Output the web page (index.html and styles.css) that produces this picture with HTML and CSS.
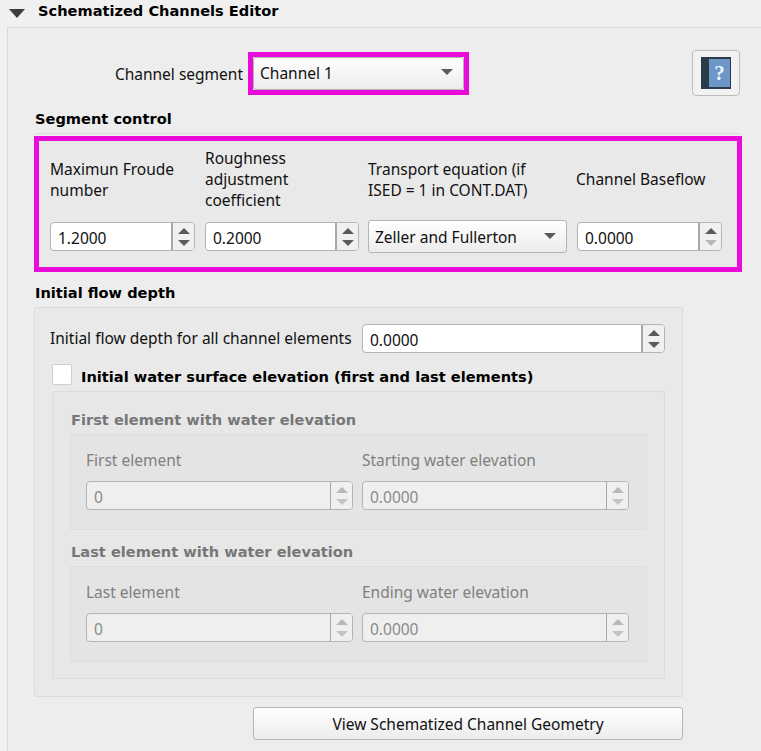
FILE: index.html
```html
<!DOCTYPE html>
<html lang="en">
  <head>
    <meta charset="UTF-8" />
    <title>Schematized Channels Editor</title>
    <link rel="stylesheet" href="styles.css">
  </head>
  <body>
    <header class="panel-head">
      <span class="collapse-arrow"></span>
      <h1 class="panel-title">Schematized Channels Editor</h1>
    </header>
    <main class="panel">
      <div class="channel-row">
        <label class="channel-label">Channel segment</label>
        <div class="highlight channel-box">
          <div class="combo channel-combo">
            <span>Channel 1</span>
            <span class="combo-arrow"></span>
          </div>
        </div>
        <button class="help-btn" type="button">
          <span class="book"><span class="book-spine"></span><span class="book-cover">?</span></span>
        </button>
      </div>

      <h2 class="group-title seg-title">Segment control</h2>
      <div class="seg-frame">
        <section class="highlight seg-grid">
          <label>Maximun Froude number</label>
          <label>Roughness adjustment coefficient</label>
          <label class="shift">Transport equation (if<br>ISED = 1 in CONT.DAT)</label>
          <label class="shift">Channel Baseflow</label>
          <div class="spin">
            <span class="spin-value">1.2000</span>
            <span class="spin-btns"><i class="up"></i><i class="down"></i></span>
          </div>
          <div class="spin">
            <span class="spin-value">0.2000</span>
            <span class="spin-btns"><i class="up"></i><i class="down"></i></span>
          </div>
          <div class="combo shift">
            <span>Zeller and Fullerton</span>
            <span class="combo-arrow"></span>
          </div>
          <div class="spin">
            <span class="spin-value">0.0000</span>
            <span class="spin-btns"><i class="up"></i><i class="down at-min"></i></span>
          </div>
        </section>
      </div>

      <h2 class="group-title depth-title">Initial flow depth</h2>
      <section class="group depth-group">
        <div class="depth-row">
          <label class="depth-label">Initial flow depth for all channel elements</label>
          <div class="spin depth-spin">
            <span class="spin-value">0.0000</span>
            <span class="spin-btns"><i class="up"></i><i class="down"></i></span>
          </div>
        </div>
        <div class="check-row">
          <span class="checkbox"></span>
          <span class="check-text">Initial water surface elevation (first and last elements)</span>
        </div>
        <div class="group wse-group">
          <h3 class="group-title off-title">First element with water elevation</h3>
          <div class="group element-group">
            <label>First element</label>
            <label>Starting water elevation</label>
            <div class="spin disabled">
              <span class="spin-value">0</span>
              <span class="spin-btns"><i class="up"></i><i class="down"></i></span>
            </div>
            <div class="spin disabled">
              <span class="spin-value">0.0000</span>
              <span class="spin-btns"><i class="up"></i><i class="down"></i></span>
            </div>
          </div>
          <h3 class="group-title off-title off-second">Last element with water elevation</h3>
          <div class="group element-group">
            <label>Last element</label>
            <label>Ending water elevation</label>
            <div class="spin disabled">
              <span class="spin-value">0</span>
              <span class="spin-btns"><i class="up"></i><i class="down"></i></span>
            </div>
            <div class="spin disabled">
              <span class="spin-value">0.0000</span>
              <span class="spin-btns"><i class="up"></i><i class="down"></i></span>
            </div>
          </div>
        </div>
      </section>
      <button class="view-btn" type="button">View Schematized Channel Geometry</button>
    </main>
  </body>
</html>
```

FILE: styles.css
```css
* {
  box-sizing: border-box;
}
html,
body {
  margin: 0;
  height: 751px;
  overflow: hidden;
}
body {
  font-family: "Noto Sans", sans-serif;
  font-size: 15.5px;
  color: #111;
  background-color: #f0f0f0;
}
label {
  display: block;
  line-height: 21px;
}
.panel-head {
  display: flex;
  align-items: center;
  height: 27px;
  padding: 0 0 6px 9px;
}
.collapse-arrow {
  width: 0;
  height: 0;
  border-left: 8px solid transparent;
  border-right: 8px solid transparent;
  border-top: 9px solid #3c3c3c;
  margin-top: 6px;
}
.panel-title {
  margin: 0 0 0 13px;
  font-family: "DejaVu Sans", sans-serif;
  font-size: 14.6px;
  font-weight: bold;
  color: #000;
}
.panel {
  margin-left: 7px;
  padding: 22px 0 12px 0;
  background-color: #ededed;
  border-top: 1px solid #d9d9d9;
  border-left: 1px solid #d9d9d9;
}
.channel-row {
  display: flex;
  align-items: center;
  height: 46px;
}
.channel-label {
  width: 235px;
  padding-top: 2px;
  text-align: right;
}
.highlight {
  border: 5px solid #e90cd8;
}
.channel-box {
  width: 221px;
  height: 43px;
  margin-left: 5px;
}
.combo {
  display: flex;
  align-items: center;
  justify-content: space-between;
  height: 33px;
  padding: 0 10px 0 6px;
  background: linear-gradient(#ffffff, #ececec);
  border: 1px solid #b4b4b4;
  border-radius: 3px;
}
.combo-arrow {
  width: 0;
  height: 0;
  margin-bottom: 2px;
  border-left: 6px solid transparent;
  border-right: 6px solid transparent;
  border-top: 6px solid #5a5a5a;
}
.help-btn {
  width: 48px;
  height: 46px;
  margin: 0 21px 0 auto;
  padding: 0;
  display: flex;
  align-items: center;
  justify-content: center;
  background: #f2f2f2;
  border: 1px solid #bdbdbd;
  border-radius: 4px;
}
.book {
  display: flex;
  width: 30px;
  height: 32px;
  border: 2px solid #2b3a48;
  border-right-width: 1px;
}
.book-spine {
  width: 6px;
  background-color: #2b3a48;
}
.book-cover {
  flex: 1;
  text-align: center;
  font-family: "Liberation Serif", serif;
  font-size: 21px;
  font-weight: bold;
  line-height: 28px;
  color: #eef3f9;
  background-color: #6c97c6;
}
.group-title {
  margin: 0;
  height: 20px;
  line-height: 20px;
  font-family: "DejaVu Sans", sans-serif;
  font-size: 14.6px;
  font-weight: bold;
  color: #000;
}
.seg-title {
  margin: 13px 0 0 27px;
}
.seg-frame {
  width: 706px;
  margin: 4px 0 0 27px;
  padding-top: 2px;
  border-top: 1px solid #dcdcdc;
}
.seg-grid {
  display: grid;
  width: 708px;
  margin-left: -1px;
  height: 136px;
  padding: 7px 0 0 11px;
  grid-template-columns: 145px 154px 198px 145px;
  grid-template-rows: 63px 33px;
  column-gap: 10px;
  row-gap: 9px;
  align-items: center;
  background-color: #e9e9e9;
}
.seg-grid .shift {
  margin-left: -1px;
}
.spin {
  display: flex;
  height: 29px;
  background-color: #fff;
  border: 1px solid #b4b4b4;
  border-radius: 4px;
}
.spin-value {
  flex: 1;
  padding: 2px 0 0 7px;
  line-height: 26px;
  border-right: 2px solid #a8a8a8;
}
.spin-btns {
  display: flex;
  flex-direction: column;
  align-items: center;
  justify-content: center;
  gap: 6px;
  width: 21px;
  background-color: #f0f0f0;
  border-radius: 0 3px 3px 0;
}
.spin-btns i {
  width: 0;
  height: 0;
  border-left: 6px solid transparent;
  border-right: 6px solid transparent;
}
.spin-btns .up {
  border-bottom: 6px solid #5a5a5a;
}
.spin-btns .down {
  border-top: 6px solid #5a5a5a;
}
.spin-btns .at-min {
  border-top-color: #b8b8b8;
}
.spin.disabled {
  color: #8a8a8a;
  background-color: #efefef;
}
.spin.disabled .spin-value {
  border-right: 1px solid #a8a8a8;
}
.spin.disabled .up {
  border-bottom-color: #b8b8b8;
}
.spin.disabled .down {
  border-top-color: #c4c4c4;
}
.depth-title {
  margin: 11px 0 0 27px;
}
.group {
  border: 1px solid #dcdcdc;
  border-radius: 2px;
}
.depth-group {
  width: 649px;
  margin: 4px 0 0 26px;
  padding: 16px 0 17px 15px;
  background-color: #e9e9e9;
}
.depth-row {
  display: flex;
  align-items: center;
}
.depth-label {
  width: 312px;
}
.depth-spin {
  width: 303px;
}
.check-row {
  display: flex;
  align-items: center;
  height: 21px;
  margin: 11px 0 0 2px;
}
.checkbox {
  width: 20px;
  height: 21px;
  background-color: #fff;
  border: 1px solid #cfcfcf;
  border-radius: 2px;
}
.check-text {
  margin-left: 9px;
  padding-top: 4px;
  font-family: "DejaVu Sans", sans-serif;
  font-size: 14.6px;
  font-weight: bold;
  color: #000;
}
.wse-group {
  width: 613px;
  margin: 6px 0 0 2px;
  padding: 18px 0 16px 17px;
  background-color: #e7e7e7;
}
.off-title {
  margin-left: 1px;
  color: #777;
}
.off-second {
  margin-top: 12px;
}
.element-group {
  display: grid;
  width: 577px;
  height: 96px;
  margin-top: 4px;
  padding: 15px 0 0 15px;
  grid-template-columns: 267px 267px;
  grid-template-rows: 20px 29px;
  column-gap: 9px;
  row-gap: 11px;
  color: #808080;
  background-color: #e4e4e4;
}
.view-btn {
  display: block;
  width: 430px;
  height: 33px;
  margin: 10px 0 0 245px;
  padding: 0;
  font-family: inherit;
  font-size: 15.5px;
  color: #111;
  background: linear-gradient(#ffffff, #ececec);
  border: 1px solid #b4b4b4;
  border-radius: 3px;
}
```
